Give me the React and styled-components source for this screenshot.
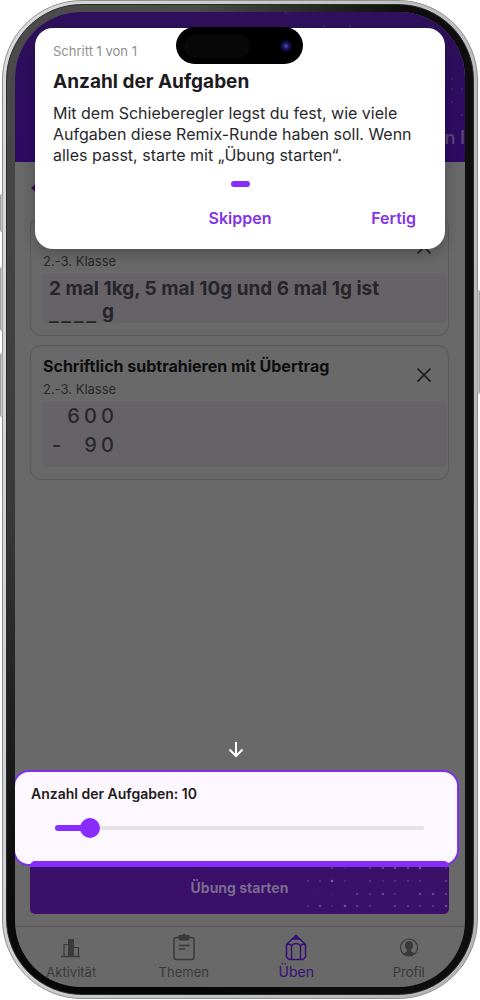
import React, { useState } from "react";
import styled, { createGlobalStyle, css } from "styled-components";

const sans = `Inter, "Open Sans", sans-serif`;

const GlobalStyle = createGlobalStyle`
  *, *::before, *::after { box-sizing: border-box; }
  body { margin: 0; background: #fff; font-family: ${sans}; color: #1d1b20; }
  button, input { font: inherit; }
  h1, h2, p { margin: 0; }
`;

const Page = styled.div`
  display: flex;
  justify-content: center;
  min-height: 100vh;
  padding: 0 2px 1px;
`;

const Phone = styled.div`
  position: relative;
  display: flex;
  flex: 1;
  max-width: 560px;
  padding: 3px;
  border-radius: 80px;
  border: 1px solid #8d908e;
  background: linear-gradient(100deg, #d9dcda 0%, #c4c7c5 50%, #b4b4b4 100%);
`;

const SideKey = styled.span`
  position: absolute;
  ${(p) => (p.$right ? "right: -3px;" : "left: -3px;")}
  top: ${(p) => p.$top}px;
  width: 3px;
  height: ${(p) => p.$length}px;
  border-radius: 2px;
  border: 1px solid #a0a0a0;
  background: #c9cbca;
`;

const Bezel = styled.div`
  display: flex;
  flex: 1;
  min-width: 0;
  padding: 7px 8px;
  border-radius: 76px;
  border: 1px solid #2b2b2b;
  background:
    linear-gradient(to right, transparent 40%, #0e0e0e 85%),
    linear-gradient(#4b4c4b 0%, #3a3a3a 50%, #101010 85%, #060606 100%);
`;

const Screen = styled.div`
  position: relative;
  display: flex;
  flex: 1;
  flex-direction: column;
  min-width: 0;
  overflow: hidden;
  border-radius: 66px;
  background: #696969;
`;

const Header = styled.header`
  position: relative;
  display: flex;
  align-items: flex-end;
  justify-content: flex-end;
  height: 150px;
  padding-bottom: 12px;
  background: linear-gradient(#30105c, #2f0a64);
`;

const HeaderTitle = styled.h1`
  color: #5a4278;
  font-size: 18px;
  line-height: 24px;
  font-weight: 600;
`;

const HeaderDots = styled.svg`
  position: absolute;
  top: 0;
  right: 0;
  fill: #5c4180;
`;

const Content = styled.main`
  display: flex;
  flex: 1;
  flex-direction: column;
  gap: 9px;
  padding: 5px 16px 10px 15px;
`;

const BackButton = styled.button`
  display: flex;
  align-items: center;
  width: 24px;
  height: 41px;
  padding: 0;
  border: 0;
  background: none;
  color: #2f0a64;
`;

const Card = styled.article`
  display: flex;
  flex-direction: column;
  padding: 10px 2px 12px 12px;
  border: 1px solid #595959;
  border-radius: 11px;
`;

const CardHead = styled.div`
  display: flex;
  align-items: flex-start;
  gap: 8px;
  padding: 0 8px 2px 0;
`;

const CardText = styled.div`
  flex: 1;
  min-width: 0;
`;

const CardTitle = styled.h2`
  min-height: 20px;
  font-size: 16px;
  line-height: 20px;
  font-weight: 700;
  color: #0f0e10;
`;

const CardMeta = styled.p`
  padding-top: 3px;
  font-size: 13px;
  line-height: 20px;
  color: #2a292b;
`;

const CloseButton = styled.button`
  display: flex;
  align-items: center;
  justify-content: center;
  width: 28px;
  height: 38px;
  padding: 0;
  border: 0;
  background: none;
  color: #1c1b1e;
`;

const Task = styled.div`
  min-height: 50px;
  padding: 4px 6px 0;
  border-radius: 4px;
  background: #666368;
  color: #27252a;
  font-size: 19px;
  line-height: 23px;
  font-weight: 700;
`;

const Blank = styled.span`
  display: inline-flex;
  gap: 3px;
  margin-right: 6px;
  font-family: "DejaVu Sans", sans-serif;
`;

const Sum = styled.div`
  display: grid;
  grid-template-columns: repeat(4, 17px);
  grid-auto-rows: 29px;
  align-items: center;
  justify-items: center;
  min-height: 66px;
  padding-left: 5px;
  border-radius: 4px;
  background: #666368;
  color: #29272b;
  font-size: 20px;
  font-weight: 500;
`;

const Hint = styled.div`
  display: flex;
  justify-content: center;
  margin-top: auto;
  padding-right: 8px;
  color: #fff;
`;

const SliderPanel = styled.section`
  display: flex;
  flex-direction: column;
  gap: 12px;
  margin: 0 6px 0 -2px;
  padding: 12px 33px 24px 16px;
  border: 2px solid #7f2fee;
  border-radius: 16px;
  background: #fdf7ff;
`;

const SliderLabel = styled.label`
  font-size: 14px;
  line-height: 20px;
  font-weight: 600;
`;

const Range = styled.input`
  appearance: none;
  display: block;
  height: 24px;
  margin: 0 0 0 24px;
  background: none;

  &::-webkit-slider-runnable-track {
    height: 6px;
    border-radius: 3px;
    background:
      linear-gradient(#892cff, #892cff) left / var(--fill) 6px no-repeat,
      linear-gradient(#e6e0e8, #e6e0e8) left / 100% 4px no-repeat;
  }
  &::-webkit-slider-thumb {
    appearance: none;
    width: 20px;
    height: 20px;
    margin-top: -7px;
    border-radius: 50%;
    background: #892cff;
  }
`;

const StartButton = styled.button`
  position: relative;
  height: 53px;
  margin: -5px 16px 12px 15px;
  padding: 0;
  overflow: hidden;
  border: 0;
  border-radius: 5px;
  background: linear-gradient(#872bfa 6px, #3a1068 6px);
  color: #7a6b90;
  font-size: 14px;
  font-weight: 700;
`;

const ButtonDots = styled.svg`
  position: absolute;
  right: 0;
  top: 0;
  fill: #7e619f;
`;

const Nav = styled.nav`
  display: grid;
  grid-template-columns: repeat(4, 1fr);
  height: 61px;
  padding-top: 6px;
  border-top: 1px solid #5a565b;
`;

const NavLink = styled.a`
  display: flex;
  flex-direction: column;
  align-items: center;
  gap: 1px;
  color: #3a393b;
  font-size: 13px;
  line-height: 20px;
  text-decoration: none;
  ${(p) =>
    p.$active &&
    css`
      color: #38107a;
      font-size: 14px;
    `}
`;

const Dialog = styled.section`
  position: absolute;
  top: 16px;
  left: 20px;
  right: 20px;
  display: flex;
  flex-direction: column;
  padding: 14px 18px 12px;
  border-radius: 18px;
  background: #fff;
  box-shadow: 0 4px 16px rgba(0, 0, 0, 0.25);
`;

const Step = styled.p`
  color: #8f8f8f;
  font-size: 13px;
  line-height: 18px;
`;

const DialogTitle = styled.h2`
  padding-top: 9px;
  font-size: 19px;
  line-height: 26px;
  font-weight: 700;
`;

const DialogText = styled.p`
  padding-top: 8px;
  font-size: 16px;
  line-height: 21px;
  color: #29282c;
`;

const Pager = styled.span`
  align-self: center;
  width: 19px;
  height: 6px;
  margin-top: 15px;
  border-radius: 3px;
  background: #892cff;
`;

const Actions = styled.div`
  display: grid;
  grid-template-columns: 1fr auto 1fr;
  margin-top: 14px;
`;

const TextButton = styled.button`
  grid-column: ${(p) => (p.$end ? 3 : 2)};
  justify-self: ${(p) => (p.$end ? "end" : "center")};
  height: 36px;
  padding: 0 11px 2px;
  border: 0;
  background: none;
  color: #8233e6;
  font-size: 16px;
  font-weight: 600;
`;

const Island = styled.div`
  position: absolute;
  top: 15px;
  left: 50%;
  display: flex;
  align-items: center;
  justify-content: space-between;
  width: 127px;
  height: 37px;
  margin-left: -64px;
  padding: 0 11px 0 8px;
  border-radius: 19px;
  background: #000;
`;

const Sensor = styled.span`
  width: 66px;
  height: 24px;
  border-radius: 12px;
  background: #080808;
`;

const Lens = styled.span`
  width: 12px;
  height: 12px;
  border-radius: 50%;
  background: radial-gradient(circle, #3c429c 0 1px, #14125a 3px, #0c0a35 5px, #050512 6px);
`;

const dots = [
  [32, 7, 0.4], [45, 7, 0.2], [70, 7, 0.4], [83, 7, 0.6], [95, 7, 0.7], [108, 7, 0.5], [120, 7, 0.9], [146, 7, 0.3],
  [8, 20, 0.4], [20, 20, 0.3], [32, 20, 1], [45, 20, 0.3], [70, 20, 0.4], [83, 20, 0.3], [95, 20, 0.4], [108, 20, 0.4], [120, 20, 0.4], [146, 20, 0.5],
  [20, 33, 0.1], [32, 33, 0.1], [57, 33, 0.5], [70, 33, 0.4], [83, 33, 0.7], [95, 33, 0.3], [120, 33, 0.7], [133, 33, 0.7], [146, 33, 0.5],
  [8, 45, 0.3], [20, 45, 0.6], [32, 45, 0.2], [45, 45, 0.8], [57, 45, 0.5], [70, 45, 0.4], [95, 45, 0.5], [108, 45, 0.4], [120, 45, 0.4], [133, 45, 0.5], [146, 45, 0.7],
];

const headerDots = [
  [179, 1], [141, 14], [115, 14], [13, 67], [13, 77], [3, 77], [13, 90], [3, 103],
];

const CloseIcon = () => (
  <svg width="16" height="16" viewBox="0 0 16 16" fill="none" stroke="currentColor" strokeWidth="1.7">
    <path d="M1.500 1.500l13 13M14.500 1.500l-13 13" />
  </svg>
);

const ActivityIcon = () => (
  <svg width="28" height="28" viewBox="0 0 28 28" fill="none" stroke="currentColor">
    <path d="M4 23.500h19" strokeWidth="1.400" />
    <path d="M7 23V11.500h4M17 14.500h4.500V23" strokeWidth="1.200" />
    <rect x="11" y="6" width="6" height="17" fill="currentColor" stroke="none" />
  </svg>
);

const TopicsIcon = () => (
  <svg width="28" height="28" viewBox="0 0 28 28" fill="none" stroke="currentColor">
    <rect x="4" y="4.500" width="20" height="22" rx="2.500" strokeWidth="1.500" />
    <path d="M9 2.500h2.500Q12 1.500 14 1.500t2.500 1H19V6q0 1-1 1h-8q-1 0-1-1z" fill="currentColor" />
    <path d="M9 12.500h10.500M9 16h6" strokeWidth="1.500" />
  </svg>
);

const PencilIcon = () => (
  <svg width="28" height="28" viewBox="0 0 28 28" fill="none" stroke="currentColor" strokeWidth="1.500" strokeLinejoin="round">
    <path d="M4.500 11.500L14 2.500l9.500 9V24l-2.500 2.500H7L4.500 24z" />
    <path d="M10.500 6L14 2.500 17.500 6z" fill="currentColor" />
    <path d="M4.500 12q2.500-2 5 .5 4.500-4 9 0 2.500-2.500 5-.5M9.500 12.500v14M18.500 12.500v14" />
  </svg>
);

const ProfileIcon = () => (
  <svg width="28" height="28" viewBox="0 0 28 28">
    <circle cx="14" cy="14.500" r="8.500" fill="none" stroke="currentColor" strokeWidth="1.200" />
    <path
      d="M14 8c-2.600 0-4 1.700-4 4.200 0 1.900.8 3.400 1.800 4.300v1.900c-.8.8-2.600 1-3.800 2 1.700 1.500 3.700 2.300 6 2.300s4.300-.8 6-2.300c-1.200-1-3-1.200-3.800-2v-1.900c1-.9 1.800-2.400 1.800-4.300C18 9.700 16.600 8 14 8z"
      fill="currentColor"
    />
  </svg>
);

function TaskCard({ title, children }) {
  return (
    <Card>
      <CardHead>
        <CardText>
          <CardTitle>{title}</CardTitle>
          <CardMeta>2.-3. Klasse</CardMeta>
        </CardText>
        <CloseButton type="button" aria-label="Entfernen">
          <CloseIcon />
        </CloseButton>
      </CardHead>
      {children}
    </Card>
  );
}

const MIN = 5;
const MAX = 75;

export default function App() {
  const [count, setCount] = useState(10);
  const ratio = (count - MIN) / (MAX - MIN);

  return (
    <Page>
      <GlobalStyle />
      <Phone>
        <SideKey $top={193} $length={38} />
        <SideKey $top={266} $length={64} />
        <SideKey $top={352} $length={64} />
        <SideKey $right $top={289} $length={104} />
        <Bezel>
          <Screen>
            <Header>
              <HeaderDots width="240" height="150" viewBox="0 0 240 150" aria-hidden="true">
                {headerDots.map(([x, y]) => (
                  <circle key={`${x}-${y}`} cx={240 - x} cy={y} r="1" opacity="0.5" />
                ))}
              </HeaderDots>
              <HeaderTitle>n I</HeaderTitle>
            </Header>
            <Content>
              <BackButton type="button" aria-label="Zurück">
                <svg width="20" height="14" viewBox="0 0 20 14" fill="none" stroke="currentColor" strokeWidth="2.500">
                  <path d="M8 2L3 7l5 5M3 7h16" />
                </svg>
              </BackButton>
              <TaskCard>
                <Task>
                  2 mal 1kg, 5 mal 10g und 6 mal 1g ist
                  <br />
                  <Blank>
                    <span>_</span>
                    <span>_</span>
                    <span>_</span>
                    <span>_</span>
                  </Blank>
                  g
                </Task>
              </TaskCard>
              <TaskCard title="Schriftlich subtrahieren mit Übertrag">
                <Sum>
                  <span />
                  <span>6</span>
                  <span>0</span>
                  <span>0</span>
                  <span>-</span>
                  <span />
                  <span>9</span>
                  <span>0</span>
                </Sum>
              </TaskCard>
              <Hint>
                <svg width="16" height="20" viewBox="0 0 16 20" fill="none" stroke="currentColor" strokeWidth="2">
                  <path d="M8 2v14M1.500 9.500L8 16l6.500-6.500" />
                </svg>
              </Hint>
            </Content>
            <SliderPanel>
              <SliderLabel htmlFor="count">Anzahl der Aufgaben: {count}</SliderLabel>
              <Range
                id="count"
                type="range"
                min={MIN}
                max={MAX}
                value={count}
                onChange={(e) => setCount(Number(e.target.value))}
                style={{ "--fill": `calc(10px + (100% - 20px) * ${ratio})` }}
              />
            </SliderPanel>
            <StartButton type="button">
              <ButtonDots width="149" height="53" viewBox="0 0 149 53" aria-hidden="true">
                {dots.map(([x, y, o]) => (
                  <circle key={`${x}-${y}`} cx={x} cy={y} r="1.300" opacity={o} />
                ))}
              </ButtonDots>
              Übung starten
            </StartButton>
            <Nav>
              <NavLink href="#aktivitaet">
                <ActivityIcon />
                Aktivität
              </NavLink>
              <NavLink href="#themen">
                <TopicsIcon />
                Themen
              </NavLink>
              <NavLink href="#ueben" $active>
                <PencilIcon />
                Üben
              </NavLink>
              <NavLink href="#profil">
                <ProfileIcon />
                Profil
              </NavLink>
            </Nav>
            <Dialog role="dialog" aria-labelledby="tour-title">
              <Step>Schritt 1 von 1</Step>
              <DialogTitle id="tour-title">Anzahl der Aufgaben</DialogTitle>
              <DialogText>
                Mit dem Schieberegler legst du fest, wie viele Aufgaben diese Remix-Runde haben soll. Wenn alles
                passt, starte mit „Übung starten“.
              </DialogText>
              <Pager />
              <Actions>
                <TextButton type="button">Skippen</TextButton>
                <TextButton type="button" $end>
                  Fertig
                </TextButton>
              </Actions>
            </Dialog>
            <Island>
              <Sensor />
              <Lens />
            </Island>
          </Screen>
        </Bezel>
      </Phone>
    </Page>
  );
}
